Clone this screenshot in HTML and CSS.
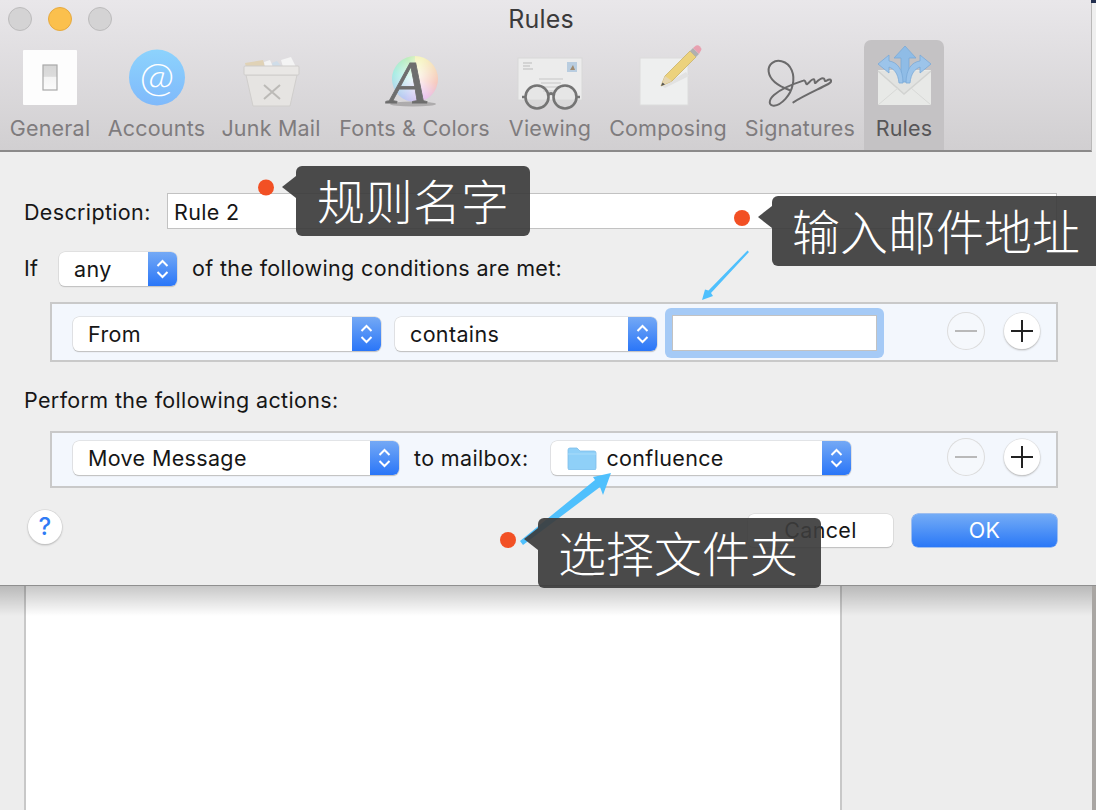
FILE: index.html
```html
<!DOCTYPE html>
<html lang="en">
<head>
<meta charset="utf-8">
<title>Rules</title>
<link rel="stylesheet" href="styles.css">
</head>
<body>
<div class="window">
  <header class="toolbar">
    <div class="titlebar">
      <div class="lights">
        <span class="light"></span>
        <span class="light light-yellow"></span>
        <span class="light"></span>
      </div>
      <div class="title">Rules</div>
    </div>
    <nav class="tools">
      <div class="tool">
        <svg class="icon" viewBox="0 0 80 70">
          <defs>
            <linearGradient id="sw" x1="0" y1="0" x2="0" y2="1"><stop offset="0" stop-color="#d6d6d6"/><stop offset=".45" stop-color="#dcdcdc"/><stop offset=".5" stop-color="#f4f4f4"/><stop offset="1" stop-color="#fbfbfb"/></linearGradient>
          </defs>
          <rect x="13" y="8" width="54" height="55" rx="1" fill="#fdfdfd"/>
          <rect x="33" y="23" width="14" height="25" fill="url(#sw)" stroke="#a8a8a8" stroke-width="1.2"/>
        </svg>
        <span class="tool-label">General</span>
      </div>
      <div class="tool">
        <svg class="icon" viewBox="0 0 80 70">
          <defs>
            <linearGradient id="at" x1="0" y1="0" x2="0" y2="1"><stop offset="0" stop-color="#8dd3fd"/><stop offset="1" stop-color="#7fb9fb"/></linearGradient>
          </defs>
          <circle cx="40" cy="35.500" r="28" fill="url(#at)"/>
          <text class="at-glyph" x="40" y="49" text-anchor="middle">@</text>
        </svg>
        <span class="tool-label">Accounts</span>
      </div>
      <div class="tool">
        <svg class="icon" viewBox="0 0 80 70">
          <path d="M14 21l18-3 2 7H15z" fill="#e0d2b6"/>
          <path d="M33 20l6-2 3 7h-8z" fill="#f3f3f3"/>
          <path d="M41 21l5-2 5 6H42z" fill="#cfdde9"/>
          <path d="M50 18l10-3 5 10H52z" fill="#f4f4f4"/>
          <path d="M15 33l7 31h37l7-31z" fill="#e6e4e2" stroke="#d0cecc"/>
          <rect x="13" y="24" width="55" height="9" rx="1" fill="#e9e7e5" stroke="#cfcdcb"/>
          <path d="M33 43l16 14M49 43L33 57" stroke="#bcbab7" stroke-width="2" fill="none"/>
        </svg>
        <span class="tool-label">Junk Mail</span>
      </div>
      <div class="tool">
        <div class="wheel-icon">
          <span class="wheel"></span>
          <svg class="icon icon-over" viewBox="0 0 80 70">
            <ellipse cx="38" cy="64" rx="23" ry="2.500" fill="#8a8888" opacity=".55"/>
            <text class="a-glyph" x="14" y="63">A</text>
          </svg>
        </div>
        <span class="tool-label">Fonts &amp; Colors</span>
      </div>
      <div class="tool">
        <svg class="icon" viewBox="0 0 80 70">
          <rect x="8" y="16" width="64" height="42" fill="#ececec" stroke="#d8d8d8"/>
          <path d="M13 21h9M13 24h7M13 27h10" stroke="#bbb" stroke-width="1"/>
          <rect x="57" y="20" width="10" height="10" fill="#b9cde0"/>
          <path d="M60 28l3-5 2 5z" fill="#a08a70"/>
          <path d="M29 37h24M31 41h20M31 45h18M33 49h12" stroke="#c6c6c6" stroke-width="1.200"/>
          <circle cx="27" cy="55" r="11.500" fill="#dcdcdc" fill-opacity=".35" stroke="#747474" stroke-width="2.600"/>
          <circle cx="55" cy="55" r="11.500" fill="#dcdcdc" fill-opacity=".35" stroke="#747474" stroke-width="2.600"/>
          <path d="M38 53q3-3 6 0M12 55h3.500M66.500 55H70" stroke="#747474" stroke-width="2.600" fill="none"/>
        </svg>
        <span class="tool-label">Viewing</span>
      </div>
      <div class="tool">
        <svg class="icon" viewBox="0 0 80 70">
          <rect x="12" y="16" width="48" height="47" fill="#eeefef" stroke="#dcdcdc"/>
          <path d="M34 44l24-14 3 4-24 12z" fill="#e2e2e2"/>
          <path d="M33 44l4-10L62 9l6 6-24 24z" fill="#ecd27c" stroke="#c9b26a" stroke-width=".8"/>
          <path d="M33 44l4-10 7 5z" fill="#e6d6b0"/>
          <path d="M33 44l1.500-3.500 2.500 2z" fill="#555"/>
          <path d="M62 9l3-3 6 6-3 3z" fill="#b0b0b0"/>
          <path d="M65 6l3-2.500q2-1 4 1t1 4l-2 3.500z" fill="#e8a0b0"/>
        </svg>
        <span class="tool-label">Composing</span>
      </div>
      <div class="tool">
        <svg class="icon" viewBox="0 0 80 70">
          <g transform="translate(-130 -2) scale(.3333)">
            <path d="M478 150C450 140 420 125 416 95 413 72 435 58 455 64 485 72 495 105 488 135 482 165 455 195 432 197 415 198 415 180 432 165 455 145 495 130 520 122 528 118 526 135 532 132 540 125 548 115 552 118 556 122 552 132 558 128 566 120 575 112 582 116 586 120 582 126 590 122 605 112 608 125 595 132 565 148 525 165 490 187" fill="none" stroke="#6b6a6b" stroke-width="6" stroke-linecap="round" stroke-linejoin="round"/>
          </g>
        </svg>
        <span class="tool-label">Signatures</span>
      </div>
      <div class="tool tool-active">
        <svg class="icon" viewBox="0 0 80 70">
          <rect x="14" y="28" width="53" height="35" fill="#e8e9e7"/>
          <path d="M14 29l26 23 27-23" fill="#e2e3e1" stroke="#d2d3d1" stroke-width="1.500"/>
          <path d="M14 63l20-17M67 63L47 46" stroke="#d8d9d7" stroke-width="1"/>
          <path d="M37 40V16h-7L41 4l11 12h-7v24z" fill="#8fbce6" stroke="#7aa9d8" stroke-width=".8"/>
          <path d="M35 41c-1-10-5-14-10-16v6L14 22l11-9v6c8 1 14 8 14 22z" fill="#9cc4ea" stroke="#7aa9d8" stroke-width=".8"/>
          <path d="M46 41c1-10 5-14 10-16v6l11-9-11-9v6c-8 1-14 8-14 22z" fill="#9cc4ea" stroke="#7aa9d8" stroke-width=".8"/>
        </svg>
        <span class="tool-label">Rules</span>
      </div>
    </nav>
  </header>

  <main class="sheet">
    <div class="row row-desc">
      <label class="row-label">Description:</label>
      <div class="textfield">Rule 2</div>
    </div>
    <div class="row row-if">
      <span class="if-label">If</span>
      <div class="select select-any">
        <span class="select-text">any</span>
        <span class="stepper"><svg viewBox="0 0 29 34"><path d="M9.500 14l5-5 5 5M9.500 20l5 5 5-5"/></svg></span>
      </div>
      <span class="if-text">of the following conditions are met:</span>
    </div>
    <section class="rule-box rule-box-if">
      <div class="select select-from">
        <span class="select-text">From</span>
        <span class="stepper"><svg viewBox="0 0 29 34"><path d="M9.500 14l5-5 5 5M9.500 20l5 5 5-5"/></svg></span>
      </div>
      <div class="select select-contains">
        <span class="select-text">contains</span>
        <span class="stepper"><svg viewBox="0 0 29 34"><path d="M9.500 14l5-5 5 5M9.500 20l5 5 5-5"/></svg></span>
      </div>
      <div class="focus-ring"><div class="focus-field"></div></div>
      <div class="round-group">
        <span class="round round-off"><svg viewBox="0 0 36 36"><path d="M7 18h22"/></svg></span>
        <span class="round"><svg viewBox="0 0 36 36"><path d="M7 18h22M18 7v22"/></svg></span>
      </div>
    </section>
    <div class="row row-perform">Perform the following actions:</div>
    <section class="rule-box rule-box-action">
      <div class="select select-move">
        <span class="select-text">Move Message</span>
        <span class="stepper"><svg viewBox="0 0 29 34"><path d="M9.500 14l5-5 5 5M9.500 20l5 5 5-5"/></svg></span>
      </div>
      <span class="to-mailbox">to mailbox:</span>
      <div class="select select-mailbox">
        <svg class="folder" viewBox="0 0 30 24">
          <path d="M1 4q0-2 2-2h7l3 3h14q2 0 2 2v15q0 2-2 2H3q-2 0-2-2z" fill="#8fd0f8" stroke="#7ebde8" stroke-width=".8"/>
          <path d="M1 8h28" stroke="#a8dcfa" stroke-width="1"/>
        </svg>
        <span class="select-text">confluence</span>
        <span class="stepper"><svg viewBox="0 0 29 34"><path d="M9.500 14l5-5 5 5M9.500 20l5 5 5-5"/></svg></span>
      </div>
      <div class="round-group">
        <span class="round round-off"><svg viewBox="0 0 36 36"><path d="M7 18h22"/></svg></span>
        <span class="round"><svg viewBox="0 0 36 36"><path d="M7 18h22M18 7v22"/></svg></span>
      </div>
    </section>
    <footer class="sheet-footer">
      <span class="help">?</span>
      <span class="btn btn-cancel">Cancel</span>
      <span class="btn btn-ok">OK</span>
    </footer>
  </main>

  <div class="below">
    <div class="list-panel"></div>
  </div>
</div>

<span class="corner"></span>

<svg class="marks" viewBox="0 0 1096 810">
  <circle class="dot" cx="266" cy="187.500" r="8"/>
  <circle class="dot" cx="742" cy="218" r="8"/>
  <circle class="dot" cx="508" cy="540" r="8"/>
  <path class="arrow" d="M747.500 250.500L708.500 290.500 705 289.500 702 300 713 296 711 293 749 252z"/>
  <path class="arrow" d="M611 473L593 477 595 480 520 541 523 545 600 487 603 495z"/>
</svg>

<div class="note note-name">规则名字</div>
<div class="note note-mail">输入邮件地址</div>
<div class="note note-folder">选择文件夹</div>
</body>
</html>
```
FILE: styles.css
```css
* { box-sizing: border-box; }
html, body { margin: 0; padding: 0; }
body {
  width: 1096px;
  height: 810px;
  overflow: hidden;
  position: relative;
  background: #efefef;
  font-family: Inter, "Liberation Sans", sans-serif;
  font-size: 21.500px;
  letter-spacing: .35px;
  color: #161616;
}
.window { height: 810px; display: flex; flex-direction: column; }

/* toolbar */
.toolbar {
  height: 152px;
  width: 1092px;
  flex: none;
  background: linear-gradient(#e9e7ea, #d1cfd1);
  border-bottom: 2px solid #8b8a8a;
  border-right: 1px solid #b9b8b8;
}
.titlebar {
  height: 40px;
  padding-right: 9px;
  display: grid;
  grid-template-columns: 1fr auto 1fr;
  align-items: center;
}
.lights { display: flex; gap: 16px; padding-left: 8px; margin-top: -3px; }
.light {
  width: 24px;
  height: 24px;
  border-radius: 50%;
  background: #d4d3d4;
  border: 1px solid #bcbbbc;
}
.light-yellow { background: #fbc04d; border-color: #e6a93f; }
.title { color: #3b3a3b; font-size: 25px; letter-spacing: .2px; margin-top: -2px; }
.tools {
  display: grid;
  grid-template-columns: 100px 113px 116px 171px 100px 136px 128px 80px;
  height: 110px;
}
.tool {
  display: flex;
  flex-direction: column;
  align-items: center;
  white-space: nowrap;
  color: #7f7c7e;
  letter-spacing: .2px;
}
.tool-active {
  background: #c4c2c4;
  border-radius: 7px 7px 0 0;
  color: #575658;
}
.icon { width: 80px; height: 70px; flex: none; margin-top: 2px; display: block; }
.tool-label { line-height: 26px; margin-top: 3px; }
.at-glyph { font-family: Lato, sans-serif; font-weight: 300; font-size: 42px; fill: #fff; }
.wheel-icon { position: relative; width: 80px; height: 72px; flex: none; }
.wheel {
  position: absolute;
  left: 17px;
  top: 16px;
  width: 46px;
  height: 46px;
  border-radius: 50%;
  background:
    radial-gradient(circle, rgba(255,255,255,.9) 0, rgba(255,255,255,.25) 75%, rgba(255,255,255,0) 100%),
    conic-gradient(#f2efa6 20deg, #f2b0a0 100deg, #e2a8e6 150deg, #9eb0ee 210deg, #7fe4d8 285deg, #a0e6a0 340deg, #f2efa6 380deg);
}
.icon-over { position: absolute; left: 0; top: 0; margin: 0; overflow: visible; }
.a-glyph { font-family: "Liberation Serif", serif; font-style: italic; font-size: 62px; fill: #6e6e6e; stroke: #6e6e6e; stroke-width: .8px; letter-spacing: 0; }

/* sheet */
.sheet {
  height: 434px;
  flex: none;
  padding: 41px 39px 0 24px;
  background: #eeeeee;
  border-bottom: 1px solid #8f8f8f;
  position: relative;
}
.row { display: flex; align-items: center; }
.row-desc { height: 36px; }
.row-label { width: 143px; flex: none; padding-top: 1px; }
.textfield {
  flex: 1;
  height: 36px;
  line-height: 37px;
  padding-left: 6px;
  background: #fff;
  border: 1px solid #c2c2c2;
}
.row-if { margin: 23px 0 0; height: 34px; }
.if-label { width: 35px; flex: none; padding-bottom: 2px; }
.if-text { padding-bottom: 2px; }
.select-any { margin-right: 15px; }
.select {
  display: flex;
  align-items: center;
  height: 34px;
  flex: none;
  background: #fff;
  border-radius: 6px;
  box-shadow: 0 0 0 .5px #d2d2d2, 0 1px 1px #b0b0b0;
  overflow: hidden;
}
.select-text { flex: 1; padding-left: 15px; white-space: nowrap; }
.stepper {
  width: 29px;
  height: 34px;
  flex: none;
  background: linear-gradient(#74a9f5, #2a76f8);
}
.stepper svg { display: block; width: 29px; height: 34px; }
.stepper path { fill: none; stroke: #fff; stroke-width: 2; }
.select-any { width: 118px; }
.select-from { width: 308px; }
.select-contains { width: 262px; margin-left: 14px; }
.select-move { width: 326px; }
.select-mailbox { width: 300px; margin-left: 23px; }
.select-mailbox .select-text { padding-left: 9px; }
.folder { width: 30px; height: 24px; margin-left: 16px; flex: none; }
.to-mailbox { margin-left: 15px; white-space: nowrap; }

.rule-box {
  display: flex;
  align-items: center;
  margin-left: 26px;
  width: 1008px;
  padding: 0 16px 0 21px;
  background: #f3f7fd;
  border: 2px solid #c9c9c9;
}
.rule-box-if { height: 60px; margin-top: 16px; padding-top: 4px; }
.rule-box-action { height: 57px; margin-top: 19px; padding-bottom: 3px; }
.focus-ring {
  width: 219px;
  height: 50px;
  margin: -2px 0 0 8px;
  padding: 7px;
  background: #a5caf6;
  border-radius: 6px;
}
.focus-field { height: 36px; background: #fff; border: 1px solid #c2c2c2; }
.round-group { display: flex; gap: 20px; margin-left: auto; }
.rule-box-if .round-group { margin-top: -6px; }
.rule-box-action .round-group { margin-top: -2px; }
.round {
  width: 36px;
  height: 36px;
  border-radius: 50%;
  background: #fff;
  box-shadow: 0 0 0 .5px #d8d8d8, 0 1px 2px #a8a8a8;
}
.round svg { display: block; width: 36px; height: 36px; }
.round path { stroke: #222; stroke-width: 2; fill: none; }
.round-off { background: #f5f8fc; box-shadow: 0 0 0 1px #dcdcdc; }
.round-off path { stroke: #b9b9b9; }
.row-perform { margin-top: 26px; height: 24px; }

.sheet-footer { display: flex; align-items: center; margin-top: 25px; height: 34px; padding-left: 4px; }
.help {
  width: 34px;
  height: 34px;
  margin-top: -6px;
  border-radius: 50%;
  background: #fff;
  color: #2f7bf5;
  font-weight: 500;
  font-size: 24px;
  line-height: 34px;
  text-align: center;
  box-shadow: 0 0 0 .5px #d0d0d0, 0 1px 2px #a8a8a8;
}
.btn {
  width: 145px;
  height: 33px;
  line-height: 33px;
  text-align: center;
  border-radius: 6px;
}
.btn-cancel {
  margin-left: auto;
  background: #fff;
  box-shadow: 0 0 0 .5px #d0d0d0, 0 1px 1px #b0b0b0;
}
.btn-ok {
  margin-left: 19px;
  color: #fff;
  background: linear-gradient(#74acf6, #2a78f7);
  box-shadow: 0 0 0 .5px #4f8df0;
}

/* content behind the sheet */
.below {
  flex: 1;
  position: relative;
  background: #ededed;
  border-right: 4px solid #a9a6a3;
  padding-left: 24px;
}
.below::before {
  content: "";
  position: absolute;
  left: 0;
  right: 0;
  top: 0;
  height: 30px;
  background: linear-gradient(rgba(0,0,0,.22), rgba(0,0,0,0));
}
.list-panel {
  width: 818px;
  height: 100%;
  background: #fff;
  border-left: 2px solid #c8c8c8;
  border-right: 2px solid #c8c8c8;
}

/* annotations */
.corner { position: absolute; right: 0; top: 0; width: 5px; height: 3px; background: #23304f; }
.marks { position: absolute; left: 0; top: 0; width: 1096px; height: 810px; }
.dot { fill: #f25024; }
.arrow { fill: #4fc0fd; }
.note {
  position: absolute;
  height: 70px;
  line-height: 66px;
  padding: 0 21px;
  background: rgba(60,60,60,.92);
  color: #fff;
  border-radius: 6px;
  font-family: "Noto Sans CJK SC", sans-serif;
  font-weight: 300;
  font-size: 48px;
  letter-spacing: 0;
  white-space: nowrap;
}
.note::before {
  content: "";
  position: absolute;
  left: -14px;
  top: 10px;
  border-style: solid;
  border-width: 11px 14px 11px 0;
  border-color: transparent rgba(60,60,60,.92) transparent transparent;
}
.note-name { left: 296px; top: 166px; }
.note-mail { left: 772px; top: 196px; width: 324px; padding-left: 20px; border-radius: 6px 0 0 6px; }
.note-folder { left: 538px; top: 518px; width: 283px; padding-left: 20px; }
```
